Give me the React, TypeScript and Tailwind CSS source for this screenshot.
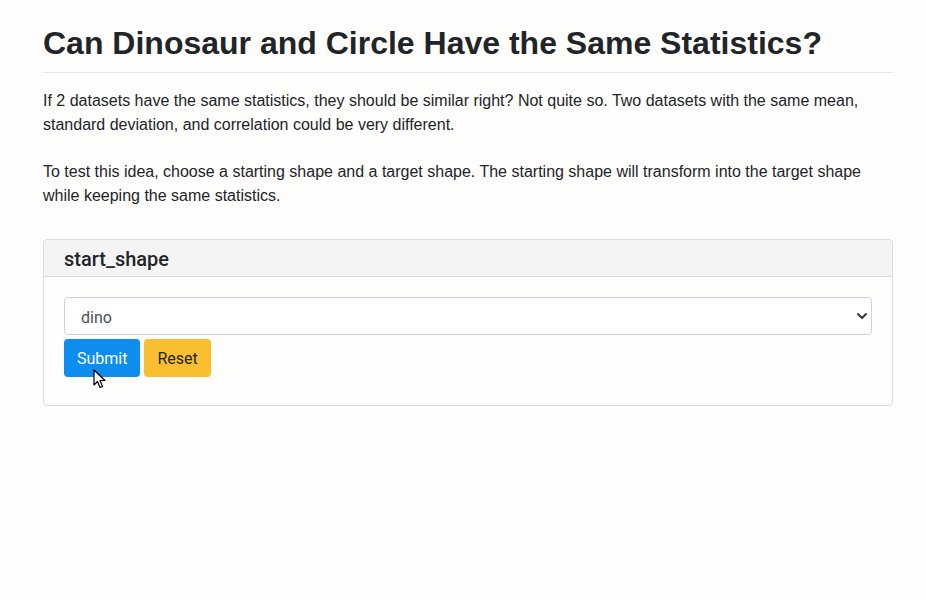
import React, { useState } from 'react';

const shapes = ['dino', 'circle', 'bullseye', 'dots', 'star', 'h_lines', 'v_lines', 'x_shape'];

const App: React.FC = () => {
  const [shape, setShape] = useState<string>('dino');

  return (
    <div className="min-h-[599px] w-full bg-[#fffefd] text-[#212529]">
      <div className="ml-[43px] w-[850px] pt-[24px]">
        <h1 className="font-['Liberation_Sans',Arial,sans-serif] text-[32px] font-bold leading-[38px]">
          Can Dinosaur and Circle Have the Same Statistics?
        </h1>
        <hr className="mt-[10px] border-t border-[#e6e6e6]" />

        <div className="mt-[16px] font-['Liberation_Sans',Arial,sans-serif] text-[16px] leading-[24px]">
          <p>
            If 2 datasets have the same statistics, they should be similar right? Not quite so. Two datasets with the same mean,
            standard deviation, and correlation could be very different.
          </p>
          <p className="mt-[23px]">
            To test this idea, choose a starting shape and a target shape. The starting shape will transform into the target shape
            while keeping the same statistics.
          </p>
        </div>

        {/* start shape card */}
        <div className="mt-[31px] rounded-[4px] border border-[#dcdcdc] font-['Roboto',sans-serif]">
          <div className="flex h-[37px] items-center rounded-t-[4px] border-b border-[#dcdcdc] bg-[#f4f4f4] px-[20px] pt-[2px]">
            <span className="text-[20px] font-medium leading-none">start_shape</span>
          </div>
          <div className="px-[20px] pt-[20px] pb-[28px]">
            <div className="relative">
              <select
                value={shape}
                onChange={(e) => setShape(e.target.value)}
                className="h-[38px] w-full appearance-none rounded-[4px] border border-[#ced4da] bg-white pl-[16px] pt-[3px] text-[16px] text-[#495057] outline-none"
              >
                {shapes.map((s) => (
                  <option key={s} value={s}>
                    {s}
                  </option>
                ))}
              </select>
              <svg className="pointer-events-none absolute right-[4px] top-[14px] h-[10px] w-[12px]" viewBox="0 0 12 10">
                <path d="M2 3l4 4 4-4" fill="none" stroke="#343a40" strokeWidth="2" strokeLinecap="round" strokeLinejoin="round" />
              </svg>
            </div>
            <div className="relative mt-[4px] flex gap-[4px]">
              <button className="h-[38px] rounded-[4px] bg-[#0d8ded] px-[13px] pt-[2px] text-[16px] text-white">Submit</button>
              <button className="h-[38px] rounded-[4px] bg-[#fabf31] px-[13px] pt-[2px] text-[16px] text-[#212529]">Reset</button>
              {/* mouse pointer */}
              <svg className="pointer-events-none absolute left-[29px] top-[30px] h-[20px] w-[14px]" viewBox="0 0 14 20">
                <path d="M1 1v15l3.5-3.5 2.5 6 2.5-1-2.5-6H12z" fill="#fff" stroke="#000" strokeWidth="1.2" strokeLinejoin="round" />
              </svg>
            </div>
          </div>
        </div>
      </div>
    </div>
  );
};

export default App;
